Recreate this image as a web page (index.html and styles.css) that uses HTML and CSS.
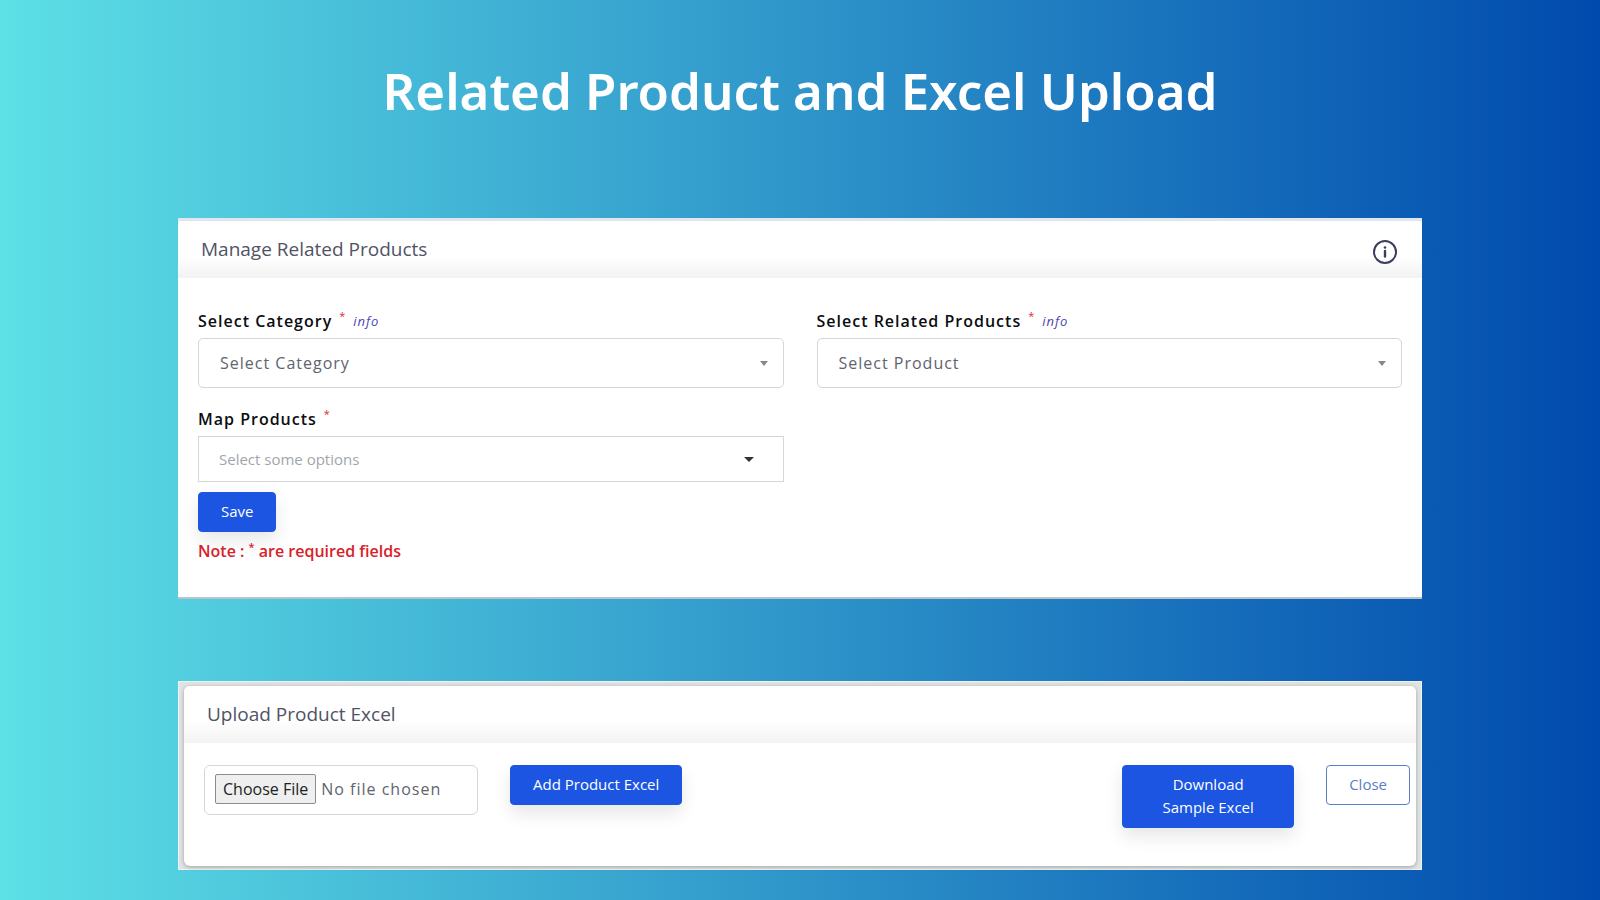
FILE: index.html
```html
<!DOCTYPE html>
<html lang="en">
<head>
  <meta charset="UTF-8" />
  <meta name="viewport" content="width=device-width, initial-scale=1.0"/>
  <title>Related Product and Excel Upload</title>
  <link rel="stylesheet" href="styles.css">
</head>
<body>
  <main class="page">
    <h1 class="page-title">Related Product and Excel Upload</h1>

    <!-- Related products form -->
    <section class="card">
      <div class="card-header">
        <h2>Manage Related Products</h2>
        <button type="button" class="info-btn" aria-label="Information">
          <svg width="26" height="26" viewBox="0 0 26 26" fill="none" stroke="#3b3f5c" stroke-width="2">
            <circle cx="13" cy="13" r="11"/>
            <path d="M13 12v5.500" stroke-width="2.400" stroke-linecap="round"/>
            <circle cx="13" cy="8.500" r="1.300" fill="#3b3f5c" stroke="none"/>
          </svg>
        </button>
      </div>
      <form class="card-body">
        <div class="form-grid">
          <div class="field">
            <div class="field-label">
              <label for="category">Select Category</label>
              <sup>*</sup>
              <a href="#" class="info-link">info</a>
            </div>
            <div class="select-box">
              <select id="category">
                <option>Select Category</option>
              </select>
            </div>
          </div>
          <div class="field">
            <div class="field-label">
              <label for="related">Select Related Products</label>
              <sup>*</sup>
              <a href="#" class="info-link">info</a>
            </div>
            <div class="select-box">
              <select id="related">
                <option>Select Product</option>
              </select>
            </div>
          </div>
          <div class="field">
            <div class="field-label">
              <label for="mapProducts">Map Products</label>
              <sup>*</sup>
            </div>
            <div class="select-box map-box">
              <select id="mapProducts">
                <option>Select some options</option>
              </select>
            </div>
          </div>
        </div>
        <button type="button" class="btn">Save</button>
        <p class="note">Note : <sup>*</sup> are required fields</p>
      </form>
    </section>

    <!-- Excel upload -->
    <section class="upload-frame">
      <div class="upload-card">
        <div class="card-header">
          <h2>Upload Product Excel</h2>
        </div>
        <form class="upload-row">
          <input type="file" class="file-input" aria-label="Product Excel">
          <button type="button" class="btn">Add Product Excel</button>
          <button type="button" class="btn download-btn">Download<br>Sample Excel</button>
          <button type="button" class="btn btn-outline">Close</button>
        </form>
      </div>
    </section>
  </main>
</body>
</html>
```
FILE: styles.css
```css
* {
  box-sizing: border-box;
}

body {
  margin: 0;
  min-height: 100vh;
  font-family: "Open Sans", "Noto Sans", sans-serif;
  font-size: 16px;
  background: linear-gradient(to right, #5de0e6, #004aad);
}

.page {
  padding: 54px 178px 30px;
}

.page-title {
  margin: 0 0 92px;
  font-family: "Noto Sans", sans-serif;
  font-size: 51px;
  font-weight: 600;
  line-height: 72px;
  text-align: center;
  color: #fff;
}

.card {
  margin-bottom: 82px;
  background: #fff;
  border-top: 3px solid #dfe6ee;
  border-bottom: 2px solid #b9c3cb;
}

.card-header {
  display: flex;
  align-items: center;
  justify-content: space-between;
  height: 57px;
  padding: 0 24px 2px 23px;
  background: linear-gradient(#fff 60%, #f3f3f3);
}

.card-header h2 {
  margin: 0;
  font-size: 19px;
  font-weight: 500;
  color: #515365;
}

.info-btn {
  padding: 6px 0 0;
  border: none;
  background: none;
  cursor: pointer;
}

.info-btn svg {
  display: block;
}

.card-body {
  padding: 28px 20px 34px;
}

.form-grid {
  display: grid;
  grid-template-columns: 1fr 1fr;
  gap: 16px 33px;
  margin-bottom: 10px;
}

.field-label {
  display: flex;
  align-items: center;
  gap: 7px;
  height: 32px;
  padding-bottom: 2px;
  letter-spacing: 1px;
}

.field-label label {
  font-weight: 600;
  color: #0b0d12;
}

sup {
  font-size: 11px;
  line-height: 0;
  color: #e02a2f;
}

.field-label sup {
  align-self: flex-start;
  line-height: 20px;
}

.info-link {
  font-size: 13px;
  font-style: italic;
  color: #4b45b0;
  text-decoration: none;
}

.select-box {
  position: relative;
}

.select-box select {
  display: block;
  width: 100%;
  height: 50px;
  padding: 0 40px 0 21px;
  border: 1px solid #d3d6db;
  border-radius: 5px;
  background: #fff;
  color: #60646e;
  font-family: inherit;
  font-size: 16px;
  letter-spacing: 1px;
  appearance: none;
}

.select-box::after {
  content: "";
  position: absolute;
  top: 23px;
  right: 16px;
  border: 4px solid transparent;
  border-top: 5px solid #888;
  border-bottom: none;
  pointer-events: none;
}

.map-box select {
  height: 46px;
  padding-left: 20px;
  border-radius: 0;
  color: #a2a5ad;
  font-size: 15px;
  letter-spacing: normal;
}

.map-box::after {
  top: 21px;
  right: 30px;
  border-width: 5px;
  border-top-color: #333;
}

.btn {
  padding: 7px 22px 8px;
  border: 1px solid #1b55e2;
  border-radius: 4px;
  background: #1b55e2;
  box-shadow: 0 8px 18px rgba(0, 0, 0, 0.1);
  color: #fff;
  font-family: inherit;
  font-size: 15px;
  line-height: 23px;
  cursor: pointer;
}

.note {
  margin: 7px 0 0;
  font-size: 16px;
  font-weight: 600;
  line-height: 24px;
  color: #d92128;
}

.note sup {
  color: inherit;
}

.upload-frame {
  padding: 4px 5px 3px;
  border: 1px solid #eef2f3;
  background: #e2e4e4;
}

.upload-card {
  overflow: hidden;
  border-radius: 6px;
  background: #fff;
  box-shadow: 0 1px 4px rgba(0, 0, 0, 0.3);
}

.upload-row {
  display: flex;
  align-items: flex-start;
  gap: 32px;
  padding: 22px 6px 38px 20px;
}

.file-input {
  width: 274px;
  height: 50px;
  padding: 8px 10px;
  border: 1px solid #d3d6db;
  border-radius: 6px;
  color: #60646e;
  font-family: inherit;
  font-size: 16px;
  letter-spacing: 1px;
}

.file-input::file-selector-button {
  height: 30px;
  margin-right: 5px;
  padding: 0 7px;
  border: 1px solid #8c8c8c;
  border-radius: 2px;
  background: #efefef;
  color: #222;
  font-family: inherit;
  font-size: 16px;
}

.download-btn {
  width: 172px;
  margin-left: auto;
}

.btn-outline {
  border-color: #5b7fc7;
  background: #fff;
  box-shadow: none;
  color: #5b7fc7;
}
```
